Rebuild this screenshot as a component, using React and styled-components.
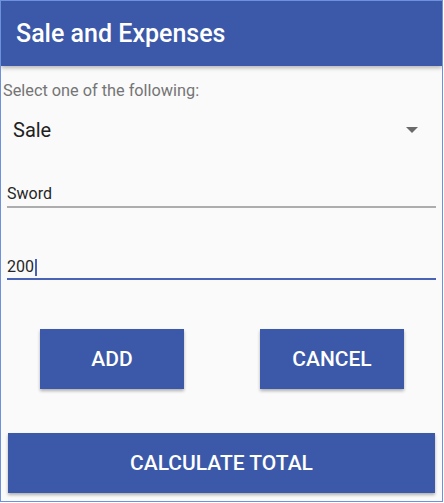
import React from "react";
import styled, { createGlobalStyle } from "styled-components";

const GlobalStyle = createGlobalStyle`
  html, body {
    margin: 0;
    padding: 0;
    background: #ffffff;
  }
  body {
    font-family: Roboto, "Liberation Sans", sans-serif;
  }
`;

const Frame = styled.div`
  box-sizing: border-box;
  width: 443px;
  height: 502px;
  border: 1px solid #6d91da;
  background: #fafafa;
  display: flex;
  flex-direction: column;
  overflow: hidden;
`;

const AppBar = styled.header`
  height: 65px;
  flex-shrink: 0;
  display: flex;
  align-items: center;
  padding-left: 15px;
  background: #3b59a8;
  box-shadow: 0 2px 4px rgba(0, 0, 0, 0.28);
  color: #ffffff;
  font-size: 25px;
  font-weight: 500;
  position: relative;
  z-index: 1;
`;

const Content = styled.main`
  display: flex;
  flex-direction: column;
`;

const Prompt = styled.div`
  margin-top: 15px;
  padding-left: 2px;
  font-size: 16.3px;
  line-height: 20px;
  color: #757575;
`;

const Spinner = styled.div`
  height: 40px;
  margin-top: 9px;
  display: flex;
  align-items: center;
  justify-content: space-between;
  padding: 0 24px 0 12px;
  font-size: 20px;
  color: #212121;
`;

const Field = styled.div`
  margin: ${(p) => p.$top}px 6px 0 6px;
  padding-bottom: ${(p) => (p.$focused ? 1 : 2)}px;
  border-bottom: 2px solid ${(p) => (p.$focused ? "#4862b5" : "#adadad")};
  font-size: 16px;
  line-height: 20px;
  color: #262626;
  display: flex;
  align-items: center;
`;

const Caret = styled.span`
  display: inline-block;
  width: 2px;
  height: 17px;
  margin-left: 1px;
  background: #4862b5;
`;

const ButtonRow = styled.div`
  display: flex;
  gap: 76px;
  padding-left: 39px;
  margin-top: 49px;
`;

const Button = styled.button`
  box-sizing: border-box;
  width: ${(p) => p.$width};
  height: 60px;
  border: none;
  border-radius: 0;
  background: #3b59a8;
  color: #ffffff;
  font-family: Roboto, "Liberation Sans", sans-serif;
  font-size: 21px;
  font-weight: 500;
  box-shadow: 0 2px 3px rgba(0, 0, 0, 0.3);
  padding: 0;
`;

const WideButton = styled(Button)`
  margin: 44px 0 0 7px;
`;

const Arrow = () => (
  <svg width="12" height="6" viewBox="0 0 12 6">
    <polygon points="0,0 12,0 6,6" fill="#6a6a6a" />
  </svg>
);

export default function App() {
  return (
    <>
      <GlobalStyle />
      <Frame>
        <AppBar>Sale and Expenses</AppBar>
        <Content>
          <Prompt>Select one of the following:</Prompt>
          <Spinner>
            <span>Sale</span>
            <Arrow />
          </Spinner>
          <Field $top={34}>Sword</Field>
          <Field $top={49} $focused>
            200
            <Caret />
          </Field>
          <ButtonRow>
            <Button $width="144px">ADD</Button>
            <Button $width="144px">CANCEL</Button>
          </ButtonRow>
          <WideButton $width="427px">CALCULATE TOTAL</WideButton>
        </Content>
      </Frame>
    </>
  );
}
